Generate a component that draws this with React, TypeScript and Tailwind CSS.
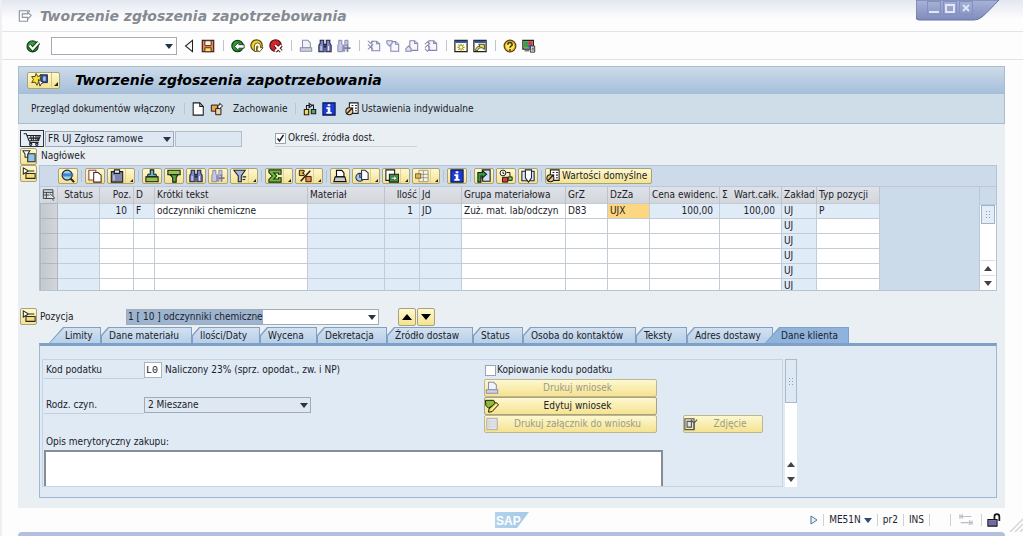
import { ReactNode } from 'react';
import clsx from 'clsx';

/* ---------- icons (all on a 16x16 grid) ---------- */

const icons: Record<string, ReactNode> = {
  exit: (
    <g fill="none" stroke="#8f959d" strokeWidth="1.3">
      <path d="M13 3.500V2H1.500v12H11v-2.500" />
      <path d="M5 5.500h6V3.500l4 4-4 4V9.500H5z" fill="#fff" />
    </g>
  ),
  check: (
    <g>
      <circle cx="7.500" cy="8.500" r="6.300" fill="#35a03c" stroke="#163d18" strokeWidth="1.4" />
      <path d="M4 7.500L7.500 11.500L14.500 4" fill="none" stroke="#123314" strokeWidth="4.800" />
      <path d="M4 7.500L7.500 11.500L14.500 4" fill="none" stroke="#fff" strokeWidth="2.600" />
    </g>
  ),
  collapse: <path d="M12 1.500v13L4 8z" fill="#fff" stroke="#222" strokeWidth="1.2" />,
  save: (
    <g>
      <path d="M1.500 1.500h13v13h-13z" fill="#e08a5a" stroke="#4d2017" strokeWidth="1.4" />
      <path d="M4.500 2h7v5.500h-7z" fill="#fff8e8" stroke="#4d2017" />
      <path d="M4.500 10h7v4.500h-7z" fill="#f5e36f" stroke="#4d2017" />
    </g>
  ),
  back: (
    <g>
      <circle cx="7.500" cy="8" r="6.500" fill="#2f9a3a" stroke="#133d17" strokeWidth="1.4" />
      <path d="M4 8.500l5-5v3h6v4H9v3z" fill="#fff" stroke="#133d17" />
    </g>
  ),
  up: (
    <g>
      <circle cx="7.500" cy="7.500" r="6.500" fill="#f3cf2d" stroke="#5c4a0c" strokeWidth="1.4" />
      <path d="M5 14V8a3.500 3.500 0 017 0v2h3l-4.500 5L7 10.500h2V8.500a.7.7 0 00-1.400 0V14z" fill="#fff" stroke="#5c4a0c" />
    </g>
  ),
  cancel: (
    <g>
      <circle cx="7.500" cy="7.500" r="6.500" fill="#d3262b" stroke="#560d0f" strokeWidth="1.4" />
      <path d="M7 7l7 7M14 7l-7 7" stroke="#560d0f" strokeWidth="4.400" />
      <path d="M7 7l7 7M14 7l-7 7" stroke="#fff" strokeWidth="2.200" />
    </g>
  ),
  printGray: (
    <g fill="#f2f2fa" stroke="#8d8fae" strokeWidth="1.2">
      <path d="M4 1.500h6l3 3V10H4z" />
      <path d="M1.500 10h13v4h-13z" fill="#cfd0e2" />
    </g>
  ),
  print: (
    <g fill="#fff" stroke="#111" strokeWidth="1.300">
      <path d="M4 1.500h6l2.500 3V9H4z" />
      <path d="M2.500 9h11l1.500 5.500H1z" fill="#c9cbd3" />
    </g>
  ),
  find: (
    <g fill="#7f88c4" stroke="#1d2140" strokeWidth="1.200">
      <path d="M2.500 1.500h4v4l.5 2v7H1V7l1.500-2zM9.500 1.500h4V5L15 7v7.500H9v-7l.5-2z" />
      <path d="M7 6h2v3H7z" />
      <path d="M3.500 8v5M12 8v5" stroke="#dfe3ff" />
    </g>
  ),
  findNext: (
    <g fill="#c6c8e2" stroke="#8587ae" strokeWidth="1.100">
      <path d="M2 1.500h3.500v4l1 2v7H1V7l1-2zM9 1.500h3.500V7H9v7H7.500V7L9 5z" />
      <path d="M12 6.500v8M8.500 10.500h7" stroke="#77799f" strokeWidth="2" />
    </g>
  ),
  pageFirst: (
    <g fill="#f6f6fc" stroke="#8587ae" strokeWidth="1.200">
      <path d="M5.500 2.500H11l3.500 3v8h-9z" />
      <path d="M11 2.500v3h3.500M1 2l3 3 3-3M1 6l3 3 3-3M1 12l3-3 3 3" fill="none" />
    </g>
  ),
  pageUp: (
    <g fill="#f6f6fc" stroke="#8587ae" strokeWidth="1.200">
      <path d="M5.500 3H11l3.500 3v8h-9z" />
      <path d="M1 2h6v3L4 8 1 5zM11 3v3h3.500" fill="#e3e4f0" />
    </g>
  ),
  pageDown: (
    <g fill="#f6f6fc" stroke="#8587ae" strokeWidth="1.200">
      <path d="M5.500 2H11l3.500 3v8h-9z" />
      <path d="M1 14v-3l3-3 3 3v3zM11 2v3h3.500" fill="#e3e4f0" />
    </g>
  ),
  pageLast: (
    <g fill="#f6f6fc" stroke="#8587ae" strokeWidth="1.200">
      <path d="M5.500 2H11l3.500 3v8h-9z" />
      <path d="M1 6l3-3 3 3M1 10l3-3 3 3M1 11l3 3 3-3M11 2v3h3.500" fill="none" />
    </g>
  ),
  session: (
    <g>
      <path d="M1 1.500h14v13H1z" fill="#fdfbe4" stroke="#222" strokeWidth="1.400" />
      <path d="M1.500 2h13v2.500h-13z" fill="#2f54a8" />
      <path d="M8 5.500v8M4 9.500h8M5 6.500l6 6M11 6.500l-6 6" stroke="#a3991c" strokeWidth="1.300" />
      <circle cx="8" cy="9.500" r="1.500" fill="#fff" />
    </g>
  ),
  shortcut: (
    <g>
      <path d="M1 1.500h14v13H1z" fill="#fdfbe4" stroke="#222" strokeWidth="1.400" />
      <path d="M1.500 2h13v2.500h-13z" fill="#2f54a8" />
      <path d="M3 13.500c0-4 2-5 5-5L6.500 6H13v6l-2.500-2C8 9.500 5.500 11 5 13.500z" fill="#e9dd55" stroke="#333" />
    </g>
  ),
  help: (
    <g>
      <circle cx="8" cy="8" r="6.700" fill="#e9a63a" stroke="#5a3d10" strokeWidth="1.300" />
      <circle cx="8" cy="8" r="4.800" fill="#f8ec53" />
      <path d="M5.500 6.500a2.500 2.500 0 115 0c0 1.500-2.500 1.500-2.500 3.500M8 11.500v2" fill="none" stroke="#3b3210" strokeWidth="1.700" />
    </g>
  ),
  layout: (
    <g>
      <path d="M1 1.500h12v10H1z" fill="#d9d9e4" stroke="#222" strokeWidth="1.400" />
      <path d="M2 2.500h5V10H2z" fill="#3aa040" />
      <path d="M7 2.500h5V7H7z" fill="#d23a3a" />
      <path d="M7 7h5v3H7z" fill="#3d56b8" />
      <path d="M9.500 8h5v7h-5z" fill="#eee" stroke="#222" />
      <path d="M3 13.500h5M11 10.500h2.500M11 12.500h2.500" stroke="#222" />
    </g>
  ),
  doc: (
    <g fill="#fff" stroke="#1b1b1b" strokeWidth="1.200">
      <path d="M2.500 1h7.500l4 4v10H2.500z" />
      <path d="M10 1v4h4" fill="none" />
    </g>
  ),
  otherDoc: (
    <g stroke="#1b1b1b" strokeWidth="1.100">
      <path d="M1.500 3.500h7v7h-7z" fill="#f0a347" />
      <path d="M6.500 7.500h6v7h-6z" fill="#f5cfa0" />
      <path d="M9 7V3.500h2V1.500l3.500 3-3.500 3z" fill="#fff" />
    </g>
  ),
  hold: (
    <g stroke="#1b1b1b" strokeWidth="1.200">
      <path d="M1.500 8.500h5v6h-5z" fill="#f3dc4c" />
      <path d="M9.500 8.500h5v5h-5z" fill="#49ad50" />
      <path d="M4 8V4h4M7 1.500L10.500 4 7 6.500zM12 8V3.500h-2" fill="none" />
    </g>
  ),
  info: (
    <g>
      <path d="M1 1h14v14H1z" fill="#1b3bd0" stroke="#0b1550" strokeWidth="1.200" />
      <path d="M6.500 2.500h3v2.300h-3zM5 6h4.500v5.500H11v2H5v-2h1.500V8H5z" fill="#fff" />
    </g>
  ),
  settings: (
    <g stroke="#1b1b1b" strokeWidth="1.200">
      <path d="M5 1h10v12H5z" fill="#fff" />
      <path d="M7.500 4h2M11.500 4h2M7.500 7h2M11.500 7h2M11.500 10h2" fill="none" />
      <circle cx="5" cy="10.500" r="4" fill="#eec58a" />
      <path d="M2.500 13l6-6.500" strokeWidth="1.500" />
    </g>
  ),
  detail: (
    <g>
      <circle cx="7" cy="7" r="5.700" fill="#9cd1ef" stroke="#222" strokeWidth="1.300" />
      <path d="M11 11l4 4" stroke="#222" strokeWidth="2.400" />
      <path d="M2 5h12v3.500H2z" fill="#2c6fc4" opacity=".8" />
    </g>
  ),
  copy: (
    <g strokeWidth="1.200">
      <path d="M1 1.500h8v11H1z" fill="#fff" stroke="#8e3c3c" />
      <path d="M6.500 4h5l3.500 3v8H6.500z" fill="#fff" stroke="#4e2525" />
    </g>
  ),
  paste: (
    <g stroke="#1d1d24" strokeWidth="1.200">
      <path d="M1.500 3h13v12h-13z" fill="#7e87a8" />
      <path d="M5 1h6v4H5z" fill="#e9e9ef" />
      <path d="M4.500 7v6" stroke="#dfe2ee" />
    </g>
  ),
  insertRow: (
    <g stroke="#1a1a1a" strokeWidth="1.200">
      <path d="M6 1h4v5h2.500l1 3h-11l1-3H6z" fill="#6ab4c9" />
      <path d="M1 9h14v5.500H1z" fill="#8fc64a" />
    </g>
  ),
  deleteRow: (
    <g stroke="#1a1a1a" strokeWidth="1.200">
      <path d="M1 1.500h14v5H1z" fill="#8fc64a" />
      <path d="M3.500 6.500h9L10.500 10v5h-4v-5z" fill="#5aa83a" />
    </g>
  ),
  filter: (
    <g stroke="#1c2233" strokeWidth="1.200">
      <path d="M1 1.500h13L9.500 8v6.500H6V8z" fill="#aab6dc" />
      <path d="M11 9h4M11 12h3" />
    </g>
  ),
  sum: (
    <path
      d="M1 1h14v5h-3V4.500H6.500L10 8l-3.500 3.500H12V10h3v5H1v-3l4-4-4-4z"
      fill="#6cbf3c"
      stroke="#1a2c10"
      strokeWidth="1.200"
    />
  ),
  subtotal: (
    <g strokeWidth="1.100" stroke="#2a1a12">
      <path d="M1.500 1.500H7v2L5 4.500l2 1v2H1.500z" fill="#e4bd38" />
      <path d="M9 8.500h6v6H9z" fill="#ee8b3b" />
      <path d="M14 2L3 14" strokeWidth="1.700" />
    </g>
  ),
  views: (
    <g stroke="#26304a" strokeWidth="1.200">
      <circle cx="5.500" cy="9.500" r="4.500" fill="#a9c8e8" />
      <path d="M7.500 1.500h4l3.500 3V12H7.500z" fill="#fff" />
      <path d="M5.500 6v3.500h2" fill="none" />
    </g>
  ),
  exportDoc: (
    <g stroke="#1a1a1a" strokeWidth="1.200">
      <path d="M1 1h10v12H1z" fill="#fff" />
      <path d="M5 6h10.500v9H5z" fill="#379a42" />
      <path d="M7 9.500h3V7.500l4 3-4 3v-2H7z" fill="#d8f2d4" strokeWidth=".5" />
    </g>
  ),
  columns: (
    <g strokeWidth="1">
      <path d="M4.500 1.500h10.500v13H4.500zM4.500 6H15M4.500 10H15M9.500 2v12" fill="#f4f3e8" stroke="#97906d" />
      <path d="M.500 5.500h6v5h-6z" fill="#e3b558" stroke="#6f5720" />
    </g>
  ),
  refresh: (
    <g stroke="#1a1a1a" strokeWidth="1.200">
      <path d="M6.500 1h8.500v13H6.500z" fill="#cfe0f4" />
      <path d="M1 4h5V1.500l5 4.500-5 4.500V8H4.500v7H1z" fill="#2f9c3c" />
    </g>
  ),
  source: (
    <g stroke="#1a1a1a" strokeWidth="1.100">
      <circle cx="4.500" cy="4.500" r="3.300" fill="#fff" />
      <path d="M4 9.500h6v5.500H4z" fill="#dc3c32" />
      <path d="M10.500 9h4.500v4h-4.500z" fill="#8fc64a" />
      <path d="M8.500 4h4v4.500M4.500 3v2h1.500" fill="none" />
    </g>
  ),
  attach: (
    <g stroke="#1a2438" strokeWidth="1.200">
      <path d="M1 2.500h14v11H1z" fill="#dfe8f4" />
      <path d="M5 1v9l3.500 5 3.500-5V1z" fill="#fff" />
    </g>
  ),
  favorite: (
    <g strokeWidth="1">
      <path d="M10.500 2h8.500v9h-8.500z" fill="#39509b" stroke="#1a2242" />
      <path d="M14 4h3v5h-3z" fill="#a9c3ef" />
      <path d="M6 .5l2 3.500 4-1-1.500 4L13 10H9l-2 4-2-3.500-4 .500 2-3.500L1 4h4z" fill="#f8e23a" stroke="#3a3208" />
      <path d="M8.500 7.500l6 3.500-2.500 1-1.500 3z" fill="#fff" stroke="#222" />
    </g>
  ),
  cart: (
    <g fill="none" stroke="#1c1f24" strokeWidth="1.200">
      <path d="M1 2h3l3 8h11l2-6H5M7 7h12M9 4l1 6M12 4v6M15 4v6M17.500 4L17 10M8 10v2h10" />
      <circle cx="9" cy="14" r="1.300" />
      <circle cx="16" cy="14" r="1.300" />
    </g>
  ),
  expandHeader: (
    <g stroke="#2a2a22" strokeWidth="1.200">
      <path d="M6.500 5.500H15V14.500H6.500z" fill="#8cc6ee" />
      <path d="M1 2h8L6.500 6v3.500h-3V6z" fill="#fff" />
    </g>
  ),
  collapseHeader: (
    <g stroke="#2a2a22" strokeWidth="1.200">
      <path d="M4.500 7.500H15V13H4.500z" fill="#f3de7c" />
      <path d="M1.500 1l6 3.500-6 3.500zM7.500 4.500H14" fill="#fff" />
    </g>
  ),
  selectAll: (
    <g fill="none" stroke="#3a3f48" strokeWidth="1.100">
      <path d="M1.500 2h11v10h-11zM1.500 5h11M1.500 8h7M5 5v7" />
      <path d="M9 6.500l5.500 5-2.500.500 1 2.500" fill="#fff" />
    </g>
  ),
  edit: (
    <g stroke="#1a1a10" strokeWidth="1.100">
      <path d="M.5 1.500H10l2 4-8 5-3-3z" fill="#8cba38" />
      <path d="M4.500 11.500l8-7.500 3 2.500-7.500 8-4 .5z" fill="#f1dc4c" />
      <path d="M7 13l6.500-7" stroke="#fff" />
    </g>
  ),
  sheet: (
    <g stroke="#a3a49d" strokeWidth="1">
      <path d="M2 1.500h12v13H2z" fill="#e4e4ea" />
      <path d="M5 2v12M2 5h12M2 8h12M2 11h12" stroke="#cfcfd8" />
    </g>
  ),
  photo: (
    <g fill="none" stroke="#55564f" strokeWidth="1.300">
      <path d="M1 2h10.500v12.500H1z" fill="#e6e4d4" />
      <path d="M3.500 5h5v6.500h-5zM11.500 14V7L15 3M8 3l3.500 4" />
    </g>
  ),
  transfer: (
    <g fill="none" stroke="#b9bcc2" strokeWidth="1.300">
      <path d="M1 1.500v5M1 4h13M4.500 1.500L2 4l2.500 2.500M15 8.500v5M15 11H2M11.500 8.500L14 11l-2.500 2.500" />
    </g>
  ),
  lock: (
    <g stroke="#17151f" strokeWidth="1.200">
      <path d="M8.500 8V4a2.800 2.800 0 015.600 0v5" fill="none" strokeWidth="2" />
      <path d="M1 7.500h10.500V15H1z" fill="#7c76ac" />
      <path d="M2.500 10h7.500M2.500 12.500h7.500" stroke="#57527f" strokeWidth=".7" />
    </g>
  ),
};

function Icon({ name, wide }: { name: string; wide?: boolean }) {
  return (
    <svg viewBox={wide ? '0 0 21 16' : '0 0 16 16'} className={wide ? 'h-[14px] w-5 shrink-0' : 'size-[14px] shrink-0'} aria-hidden="true">
      {icons[name]}
    </svg>
  );
}

/* ---------- small shared parts ---------- */

const yellow = 'border border-[#aaa27b] bg-linear-to-b from-[#fdf8d0] to-[#f5e38f] rounded-xs';

function Arrow({ up, big, className }: { up?: boolean; big?: boolean; className?: string }) {
  return (
    <svg viewBox="0 0 8 5" className={clsx('shrink-0', big ? 'h-[6px] w-2.5' : 'h-[5px] w-2', className)} preserveAspectRatio="none" aria-hidden="true">
      <path d={up ? 'M0 5L4 0l4 5z' : 'M0 0h8L4 5z'} fill="currentColor" />
    </svg>
  );
}

function IconButton({ name, label }: { name: string; label: string }) {
  return (
    <button type="button" aria-label={label} className="flex size-[14px] items-center justify-center">
      <Icon name={name} />
    </button>
  );
}

function Sep() {
  return (
    <span className="flex w-[6px] justify-center">
      <span className="h-[11px] w-px bg-[#bcc6d2]" />
    </span>
  );
}

function GridButton({ name, label, menu }: { name: string; label: string; menu?: boolean }) {
  return (
    <button type="button" aria-label={label} className={clsx(yellow, 'flex h-4 items-center', menu ? 'w-7' : 'w-5 justify-center')}>
      <span className={clsx('flex', menu && 'border-r border-[#ddd2a0] pl-0.5 pr-px')}>
        <Icon name={name} />
      </span>
      {menu && (
        <svg viewBox="0 0 4 4" className="ml-1 mt-2 size-[3px]" aria-hidden="true">
          <path d="M4 0v4H0z" fill="#222" />
        </svg>
      )}
    </button>
  );
}

function GridSep() {
  return (
    <span className="flex w-[3px] justify-center">
      <span className="h-3 w-px bg-[#b3c1d2]" />
    </span>
  );
}

function Grip() {
  return (
    <svg viewBox="0 0 5 7" className="h-[7px] w-[5px]" aria-hidden="true">
      <path d="M0 0h1v1H0zM3 0h1v1H3zM0 3h1v1H0zM3 3h1v1H3zM0 6h1v1H0zM3 6h1v1H3z" fill="#8ba0b8" />
    </svg>
  );
}

/* ---------- data ---------- */

const mainTools: (string | null)[][] = [
  ['back', 'Wstecz'], ['up', 'Zakończ'], ['cancel', 'Anuluj'], [null],
  ['printGray', 'Drukuj'], ['find', 'Szukaj'], ['findNext', 'Szukaj dalej'], [null],
  ['pageFirst', 'Pierwsza strona'], ['pageUp', 'Poprzednia strona'], ['pageDown', 'Następna strona'], ['pageLast', 'Ostatnia strona'], [null],
  ['session', 'Nowy tryb'], ['shortcut', 'Skrót'], [null],
  ['help', 'Pomoc'], ['layout', 'Układ'],
];

const gridTools: { name?: string; label?: string; menu?: boolean }[] = [
  { name: 'detail', label: 'Szczegóły' }, {},
  { name: 'copy', label: 'Kopiuj' }, { name: 'paste', label: 'Wklej', menu: true }, {},
  { name: 'insertRow', label: 'Sortuj rosnąco' }, { name: 'deleteRow', label: 'Sortuj malejąco' },
  { name: 'find', label: 'Szukaj w tabeli' }, { name: 'findNext', label: 'Szukaj dalej w tabeli' },
  { name: 'filter', label: 'Filtr', menu: true }, {},
  { name: 'sum', label: 'Suma', menu: true }, { name: 'subtotal', label: 'Suma częściowa', menu: true }, {},
  { name: 'print', label: 'Drukuj tabelę' }, { name: 'views', label: 'Widoki', menu: true },
  { name: 'exportDoc', label: 'Eksport', menu: true }, { name: 'columns', label: 'Układ kolumn', menu: true }, {},
  { name: 'info', label: 'Informacje' }, {},
  { name: 'refresh', label: 'Odśwież' }, { name: 'source', label: 'Źródło' }, { name: 'attach', label: 'Załącznik' }, {},
];

const columns = [
  { head: 'Status', value: '', width: 'w-[42px]', ro: true, center: true },
  { head: 'Poz.', value: '10', width: 'w-[34px]', right: true, filled: true },
  { head: 'D', value: 'F', width: 'w-[21px]', filled: true },
  { head: 'Krótki tekst', value: 'odczynniki chemiczne', width: 'w-[153px]' },
  { head: 'Materiał', value: '', width: 'w-[77px]', ro: true },
  { head: 'Ilość', value: '1', width: 'w-[35px]', ro: true, right: true },
  { head: 'Jd', value: 'JD', width: 'w-[42px]', ro: true },
  { head: 'Grupa materiałowa', value: 'Zuż. mat. lab/odczyn', width: 'w-[104px]' },
  { head: 'GrZ', value: 'D83', width: 'w-[42px]' },
  { head: 'DzZa', value: 'UJX', width: 'w-[42px]', active: true },
  { head: 'Cena ewidenc.', value: '100,00', width: 'w-[70px]', right: true, filled: true },
  { head: 'Wart.całk.', value: '100,00', width: 'w-[62px]', right: true, filled: true, sum: true },
  { head: 'Zakład', value: 'UJ', width: 'w-[35px]', ro: true, repeat: true },
  { head: 'Typ pozycji', value: 'P', width: 'w-[63px]', filled: true },
];

const tabs = [
  { title: 'Limity', width: 'w-[52px] pl-4', first: true },
  { title: 'Dane materiału', width: 'w-[91px]' },
  { title: 'Ilości/Daty', width: 'w-[68px]' },
  { title: 'Wycena', width: 'w-[57px]' },
  { title: 'Dekretacja', width: 'w-[70px]' },
  { title: 'Źródło dostaw', width: 'w-[86px]' },
  { title: 'Status', width: 'w-[50px]' },
  { title: 'Osoba do kontaktów', width: 'w-[113px]' },
  { title: 'Teksty', width: 'w-[51px]' },
  { title: 'Adres dostawy', width: 'w-[86px]' },
  { title: 'Dane klienta', width: 'w-[84px] -ml-2 pl-4', active: true },
];

/* ---------- sections ---------- */

function WindowControls() {
  return (
    <div className="absolute right-[23px] top-0 h-[21px] w-[84px]">
      <svg viewBox="0 0 84 21" className="absolute inset-0 h-full w-full" aria-hidden="true">
        <defs>
          <linearGradient id="corner" x1="0" y1="0" x2="0" y2="1">
            <stop offset="0" stopColor="#a9b3d8" />
            <stop offset="1" stopColor="#7f8cbc" />
          </linearGradient>
        </defs>
        <path d="M0 0h83C77 6 71 13 66 17q-4 3-8 3H3q-3 0-3-3z" fill="url(#corner)" stroke="#6673a4" />
      </svg>
      <div className="relative flex gap-0.5 pl-[11px] pt-px">
        {['Minimalizuj', 'Maksymalizuj', 'Zamknij'].map((label, i) => (
          <button key={label} type="button" aria-label={label} className="flex size-[14px] items-center justify-center border border-[#8390bf]">
            <svg viewBox="0 0 10 10" className="size-[10px]" fill="none" stroke="#dfe6fa" strokeWidth="2" aria-hidden="true">
              {i === 0 && <path d="M0 9h10" />}
              {i === 1 && <path d="M1 2h8v7H1z" />}
              {i === 2 && <path d="M2 2l6 6M8 2L2 8" />}
            </svg>
          </button>
        ))}
      </div>
    </div>
  );
}

function ItemsGrid() {
  return (
    <div className="min-w-0 flex-1 border border-[#b4c4d5] bg-[#cbdbea]">
      <div className="flex h-5 items-center gap-0.5 bg-[#ccdaea] pl-[18px]">
        {gridTools.map((t, i) =>
          t.name ? <GridButton key={i} name={t.name} label={t.label!} menu={t.menu} /> : <GridSep key={i} />
        )}
        <button type="button" className={clsx(yellow, 'flex h-4 items-center gap-0.5 whitespace-nowrap pr-1')}>
          <Icon name="settings" />
          Wartości domyślne
        </button>
      </div>
      <div className="flex border-t border-[#b9c9da]">
        <div className="h-[103px] min-w-0 flex-1 overflow-hidden">
          <table className="w-[839px] table-fixed border-collapse">
            <thead>
              <tr className="h-4 bg-linear-to-b from-[#dfe3e9] to-[#d2d5da]">
                <th className="w-[17px] border-r border-[#bcc3cc] p-0">
                  <span className="flex justify-center"><Icon name="selectAll" /></span>
                </th>
                {columns.map((c) => (
                  <th
                    key={c.head}
                    className={clsx(
                      c.width,
                      'whitespace-nowrap border-r border-[#bcc3cc] p-0 px-0.5 font-normal',
                      c.right ? 'text-right' : c.center ? 'text-center' : 'text-left'
                    )}
                  >
                    {c.sum ? <span className="flex justify-between"><span>Σ</span>{c.head}</span> : c.head}
                  </th>
                ))}
              </tr>
            </thead>
            <tbody>
              {[0, 1, 2, 3, 4, 5].map((row) => (
                <tr key={row} className="h-[15px]">
                  <td className="border border-[#b0b6be] bg-linear-to-r from-[#c3c8cf] to-[#d3d7dc] p-0" />
                  {columns.map((c) => (
                    <td
                      key={c.head}
                      className={clsx(
                        'whitespace-nowrap border border-[#c3ccd6] p-0 leading-[14px]',
                        c.right ? 'pr-1.5 text-right' : 'pl-0.5',
                        row === 0 && c.active ? 'bg-[#fcd680]' : c.ro || (row === 0 && c.filled) ? 'bg-[#dfebf6]' : 'bg-white'
                      )}
                    >
                      {row === 0 || c.repeat ? c.value : ''}
                    </td>
                  ))}
                </tr>
              ))}
            </tbody>
          </table>
        </div>
        <div className="flex w-[17px] flex-col border-l border-[#b9c9da]">
          <div className="h-[18px] border-b border-[#b9c9da]" />
          <div className="flex flex-1 flex-col bg-white px-px">
            <div className="flex h-[19px] items-center justify-center border border-[#9fb3ca] bg-[#e4edf6]"><Grip /></div>
            <div className="flex-1" />
            <button type="button" aria-label="W górę" className="flex h-[15px] items-center justify-center border-t border-[#d5dde6] text-[#444]"><Arrow up /></button>
            <button type="button" aria-label="W dół" className="flex h-[15px] items-center justify-center border-t border-[#d5dde6] text-[#444]"><Arrow /></button>
          </div>
        </div>
      </div>
    </div>
  );
}

function Tabs() {
  return (
    <div role="tablist" className="flex h-4 pl-2.5">
      {tabs.map((t) => (
        <button
          key={t.title}
          type="button"
          role="tab"
          aria-selected={!!t.active}
          className={clsx(
            'relative isolate h-4 whitespace-nowrap text-left leading-[18px]',
            'before:absolute before:inset-0 before:-z-20 before:bg-[#7f9fc4] after:absolute after:inset-x-px after:bottom-0 after:top-px after:-z-10',
            t.active ? 'after:bg-[#8fb3dd]' : 'after:bg-linear-to-b after:from-[#d3e1f0] after:to-[#b7cfe8]',
            t.first || t.active
              ? 'before:[clip-path:polygon(14px_0,100%_0,100%_100%,0_100%)] after:[clip-path:polygon(14px_0,100%_0,100%_100%,0_100%)]'
              : 'pl-2 before:[clip-path:polygon(7px_0,100%_0,100%_100%,0_100%,0_8px)] after:[clip-path:polygon(7px_0,100%_0,100%_100%,0_100%,0_8px)]',
            t.width
          )}
        >
          {t.title}
        </button>
      ))}
    </div>
  );
}

function WideButton({ name, disabled, children, className }: { name: string; disabled?: boolean; children: ReactNode; className: string }) {
  return (
    <button type="button" disabled={disabled} className={clsx(yellow, 'flex h-[18px] items-center disabled:border-[#bdb68f] disabled:text-[#9d9a86]', className)}>
      <Icon name={name} />
      <span className="flex-1 text-center">{children}</span>
    </button>
  );
}

function ClientData() {
  return (
    <div className="flex h-[155px] border border-t-[3px] border-[#9db8d3] border-t-[#7fa0c6] bg-[#e0eaf5] pb-2.5 pl-0.5 pt-[13px]">
      <div className="w-[741px] overflow-hidden border border-[#c5d3e2] pl-px">
        <div className="flex pt-0.5">
          <div className="flex w-[440px] flex-col">
            <div className="flex">
              <label htmlFor="tax" className="w-[100px] border-b border-[#c3cfdc] pl-0.5 leading-4">Kod podatku</label>
              <input id="tax" defaultValue="L0" className="h-4 w-[18px] border border-[#a9b4c0] bg-white pl-px font-['Liberation_Mono',monospace]" />
              <span className="pl-[3px] leading-4">Naliczony 23% (sprz. opodat., zw. i NP)</span>
            </div>
            <div className="mt-[18px] flex">
              <label htmlFor="activity" className="w-[100px] border-b border-[#c3cfdc] pl-0.5 leading-4">Rodz. czyn.</label>
              <div className="relative w-[167px]">
                <select id="activity" className="h-4 w-full appearance-none border border-[#9fabb8] bg-[#dfe8f2] pl-[3px]">
                  <option>2 Mieszane</option>
                </select>
                <Arrow className="pointer-events-none absolute right-[3px] top-[6px] text-[#26344a]" />
              </div>
            </div>
            <label htmlFor="opis" className="mt-5 pl-0.5 leading-4">Opis merytoryczny zakupu:</label>
          </div>
          <div className="flex flex-1 flex-col">
            <label className="flex h-4 items-center gap-px">
              <input type="checkbox" className="ml-px size-[11px] appearance-none border border-[#98a4b1] bg-white" />
              Kopiowanie kodu podatku
            </label>
            <WideButton name="printGray" disabled className="mt-px w-[173px]">Drukuj wniosek</WideButton>
            <WideButton name="edit" className="w-[173px]">Edytuj wniosek</WideButton>
            <div className="flex gap-[26px]">
              <WideButton name="sheet" disabled className="w-[173px]">Drukuj załącznik do wniosku</WideButton>
              <WideButton name="photo" disabled className="w-20">Zdjęcie</WideButton>
            </div>
          </div>
        </div>
        <textarea id="opis" className="block h-10 w-[619px] resize-none border-2 border-[#868d94] bg-white" />
      </div>
      <div className="ml-0.5 flex w-3 flex-col bg-white">
        <div className="flex h-11 items-center justify-center border border-[#a9bacd] bg-[#dfe9f4]"><Grip /></div>
        <div className="flex-1" />
        <button type="button" aria-label="Przewiń w górę" className="flex h-[15px] items-center justify-center text-[#444]"><Arrow up /></button>
        <button type="button" aria-label="Przewiń w dół" className="flex h-[15px] items-center justify-center text-[#444]"><Arrow /></button>
      </div>
    </div>
  );
}

function StatusBar() {
  const line = <span className="h-3 w-px bg-[#ccd2da]" />;
  return (
    <footer className="grid h-6 grid-cols-[1fr_auto_1fr] items-center">
      <span />
      <svg viewBox="0 0 36 16" className="h-4 w-9" aria-label="SAP">
        <defs>
          <linearGradient id="sap" x1="0" y1="0" x2="1" y2="0">
            <stop offset="0" stopColor="#b4d3ec" />
            <stop offset="1" stopColor="#a3cae8" />
          </linearGradient>
        </defs>
        <path d="M0 0h34L22 16H0z" fill="url(#sap)" />
        <text x="1" y="13" fontSize="12" fontWeight="bold" fill="#fff" fontFamily="Liberation Sans, sans-serif">SAP</text>
      </svg>
      <div className="flex h-full items-center justify-end">
        <button type="button" aria-label="Rozwiń" className="mr-[5px]">
          <svg viewBox="0 0 8 10" className="h-2.5 w-2" aria-hidden="true"><path d="M1 1l6 4-6 4z" fill="#eaf3fb" stroke="#4c7397" /></svg>
        </button>
        {line}
        <button type="button" className="flex items-center gap-[3px] px-[5px] text-[#1c2430]">ME51N <Arrow className="text-[#2f4a75]" /></button>
        {line}
        <span className="px-[5px]">pr2</span>
        {line}
        <span className="px-[5px]">INS</span>
        {line}
        <span className="w-5" />
        {line}
        <span className="px-2"><Icon name="transfer" /></span>
        {line}
        <span className="pl-[5px]"><Icon name="lock" /></span>
        <svg viewBox="0 0 14 14" className="ml-2 size-[14px] self-end" aria-hidden="true">
          <path d="M1 14L14 1M6 14l8-8M11 14l3-3" stroke="#d3d7dd" strokeWidth="1.500" />
        </svg>
      </div>
    </footer>
  );
}

export default function App() {
  return (
    <div className="relative flex min-h-screen flex-col overflow-hidden border-l-2 border-[#eef0f4] bg-[#fdfdfe] font-['DejaVu_Sans_Condensed','Noto_Sans',sans-serif] text-[10px] leading-[14px] text-[#1a2129]">
      <WindowControls />

      <header className="flex h-8 items-center gap-2 border-b border-[#e1e4e8] bg-linear-to-b from-[#e3e7f0] to-[#fdfdfe] to-60% pl-4">
        <Icon name="exit" />
        <h1 className="whitespace-nowrap font-['DejaVu_Sans',sans-serif] text-[14px] font-bold italic leading-5 text-[#868b92]">Tworzenie zgłoszenia zapotrzebowania</h1>
      </header>

      <div className="flex h-7 items-center gap-[5px] border-b border-[#dfe2e6] pl-6">
        <IconButton name="check" label="Zatwierdź" />
        <div className="relative ml-[6px] w-[126px]">
          <input aria-label="Kod transakcji" className="block h-[18px] w-full border border-[#a5abb3] bg-white pl-1 pr-4" />
          <Arrow className="pointer-events-none absolute right-1 top-[7px] text-[#26344a]" />
        </div>
        <IconButton name="collapse" label="Zwiń" />
        <IconButton name="save" label="Zapisz" />
        <Sep />
        {mainTools.map(([name, label], i) => (name ? <IconButton key={i} name={name} label={label!} /> : <Sep key={i} />))}
      </div>

      <main className="ml-4 mr-[18px] mt-1.5 flex-1 bg-[#eaeff4] pb-2.5">
        <div className="flex h-7 items-center gap-[15px] border border-[#a9bdd1] bg-linear-to-b from-[#cddbe8] to-[#a6bfdb] pl-2">
          <button type="button" aria-label="Ulubione" className={clsx(yellow, 'flex h-[17px] w-[33px] items-center')}>
            <span className="flex w-[24px] justify-center border-r border-[#cfc48e]"><Icon name="favorite" wide /></span>
            <svg viewBox="0 0 4 4" className="ml-0.5 mt-2 size-1" aria-hidden="true"><path d="M4 0v4H0z" fill="#222" /></svg>
          </button>
          <h2 className="whitespace-nowrap font-['DejaVu_Sans',sans-serif] text-[14px] font-bold italic leading-5 text-black">Tworzenie zgłoszenia zapotrzebowania</h2>
        </div>
        <div className="flex h-[30px] items-center border-x border-b border-[#a9bdd1] bg-[#cfdde8] pl-3">
          <button type="button" className="w-[150px] whitespace-nowrap text-left">Przegląd dokumentów włączony</button>
          <Sep />
          <div className="ml-1 flex items-center gap-[5px]">
            <IconButton name="doc" label="Nowy" />
            <IconButton name="otherDoc" label="Inny dokument" />
            <button type="button" className="ml-1">Zachowanie</button>
            <Sep />
            <IconButton name="hold" label="Sprawdź" />
            <IconButton name="info" label="Pomoc aplikacji" />
            <button type="button" className="ml-1 flex items-center gap-0.5 whitespace-nowrap">
              <Icon name="settings" />
              Ustawienia indywidualne
            </button>
          </div>
        </div>

        <div className="pl-0.5 pr-2">
          <div className="mt-1.5 flex h-[17px] items-center">
            <button type="button" aria-label="Koszyk" className="flex h-[17px] w-6 items-center justify-center border border-[#30343a] bg-[#e6edf4]">
              <Icon name="cart" wide />
            </button>
            <div className="relative ml-px w-[129px]">
              <select aria-label="Rodzaj dokumentu" className="block h-4 w-full appearance-none border border-[#9fabb8] bg-[#dfe8f2] pl-0.5">
                <option>FR UJ Zgłosz ramowe</option>
              </select>
              <Arrow className="pointer-events-none absolute right-[3px] top-[6px] text-[#26344a]" />
            </div>
            <input aria-label="Numer zapotrzebowania" readOnly className="ml-px h-4 w-[67px] border border-[#b1bfcd] bg-[#dde7f1]" />
            <label className="ml-[33px] flex h-[17px] w-[142px] items-center gap-0.5 whitespace-nowrap border-b border-[#cbd3db]">
              <span className="relative flex">
                <input type="checkbox" defaultChecked className="peer size-[11px] appearance-none border border-[#98a4b1] bg-white" />
                <svg viewBox="0 0 11 11" className="pointer-events-none absolute inset-0 hidden size-[11px] peer-checked:block" aria-hidden="true">
                  <path d="M2.500 5.500l2 2.500 4-6" fill="none" stroke="#222" strokeWidth="1.500" />
                </svg>
              </span>
              Określ. źródła dost.
            </label>
          </div>

          <div className="flex h-[18px] items-center gap-1">
            <button type="button" aria-label="Rozwiń nagłówek" className={clsx(yellow, 'flex size-[17px] items-center justify-center')}><Icon name="expandHeader" /></button>
            Nagłówek
          </div>

          <div className="flex items-start gap-0.5">
            <button type="button" aria-label="Zwiń pozycje" className={clsx(yellow, 'flex size-[17px] items-center justify-center')}><Icon name="collapseHeader" /></button>
            <ItemsGrid />
          </div>

          <div className="mt-4 flex h-[19px] items-center">
            <button type="button" aria-label="Zwiń pozycję" className={clsx(yellow, 'flex size-[17px] shrink-0 items-center justify-center')}><Icon name="collapseHeader" /></button>
            <label htmlFor="item" className="ml-[3px] w-[86px]">Pozycja</label>
            <div className="relative w-[253px]">
              <select
                id="item"
                className="block h-4 w-full appearance-none border border-[#a5abb3] bg-white bg-linear-to-b from-[#9db4d0] to-[#9db4d0] bg-[length:136px_14px] bg-no-repeat pl-px"
              >
                <option>1 [ 10 ] odczynniki chemiczne</option>
              </select>
              <Arrow className="pointer-events-none absolute right-[3px] top-[6px] text-[#26344a]" />
            </div>
            <button type="button" aria-label="Poprzednia pozycja" className={clsx(yellow, 'ml-[19px] flex h-[18px] w-[18px] items-center justify-center text-black')}><Arrow up big /></button>
            <button type="button" aria-label="Następna pozycja" className={clsx(yellow, 'ml-px flex h-[18px] w-[18px] items-center justify-center text-black')}><Arrow big /></button>
          </div>

          <div className="ml-[19px] mt-px">
            <Tabs />
            <ClientData />
          </div>
        </div>
      </main>

      <StatusBar />
      <div className="ml-4 mr-[18px] h-1 rounded-t-[18px] bg-[#b4bfdf]" />
    </div>
  );
}
